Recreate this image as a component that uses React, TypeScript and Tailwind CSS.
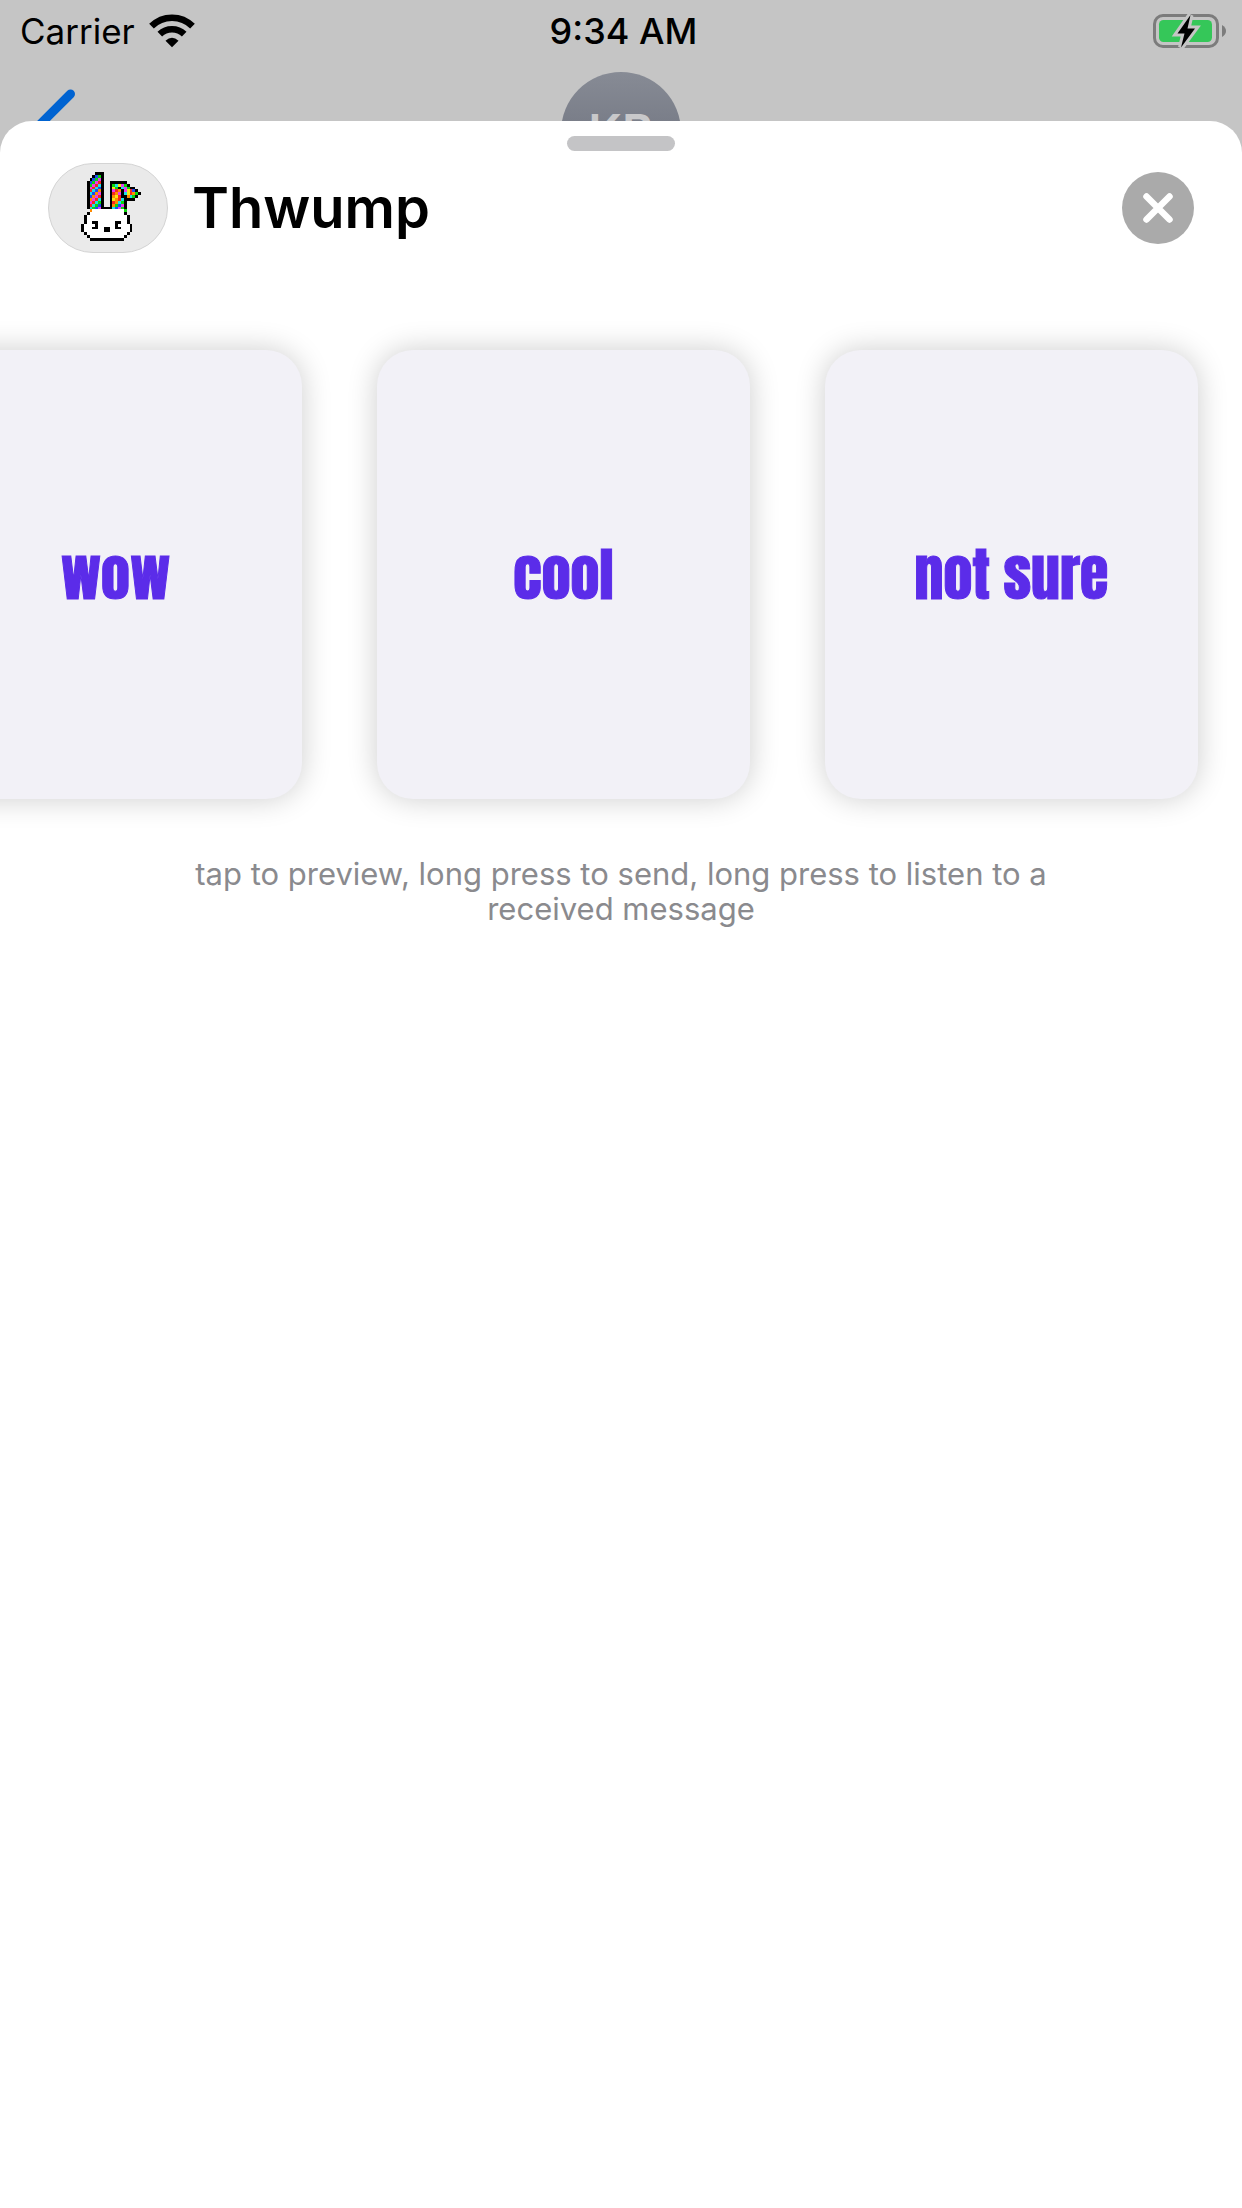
import React from "react";

const INK: Record<string, string> = {
  k: "#000000",
  w: "#ffffff",
  r: "#f5281e",
  o: "#ff8a00",
  y: "#f5e616",
  g: "#0bd80b",
  c: "#1fe0e6",
  b: "#1c4cf0",
  m: "#e83cf0",
};

const BUNNY = [
  ".....kkk.............",
  "....kbgk.............",
  "...kbgmk.............",
  "..kbgmrk..kkkkkk.....",
  "..kgmrck..kgcymgk....",
  "..kmrcbk..kygkcmgkk..",
  "..krcbok..kmrokmyrbk.",
  "..kcbomk..kromkcyrogk",
  "..kbomrk..koyrkkocgk.",
  "..komrck..kyorckkkk..",
  "..kmrcgk..krocgk.....",
  "..krcgbk..kogbmk.....",
  "..kcgbmkkkkcbmgk.....",
  "...owwwwwwwwwwwg.....",
  "..kwwwwwwwwwwwwk.....",
  ".kwwwwwwwwwwwwwwk....",
  ".kwwwwwwwwwwwwwwk....",
  ".kwwkkwwwwwwkkwwk....",
  "kwwwwkwwwwwwkwwwwk...",
  "kwwwkkwwkkwwkkwwwk...",
  "kwwwwwwwkkwwwwwwwk...",
  ".kwwwwwwwwwwwwwwk....",
  "..kwwwwwwwwwwwwk.....",
  "...kkkkkkkkkkkk......",
];

function Bunny() {
  return (
    <svg viewBox="0 0 21 24" className="h-[69px] w-[60px]" shapeRendering="crispEdges" aria-hidden="true">
      {BUNNY.flatMap((row, y) =>
        row.split("").map((p, x) => (p === "." ? null : <rect key={`${x}-${y}`} x={x} y={y} width="1" height="1" fill={INK[p]} />)),
      )}
    </svg>
  );
}

function Wifi() {
  return (
    <svg viewBox="0 0 46 34" className="h-[34px] w-[46px]" aria-hidden="true">
      <g fill="none" stroke="#000" strokeWidth="6.6">
        <path d="M2.5 12.2A29 29 0 0 1 43.5 12.2" />
        <path d="M10.8 20.2A17.5 17.5 0 0 1 35.2 20.2" />
      </g>
      <path d="M16.5 26.7Q23 20.7 29.5 26.7L23 33.2Z" />
    </svg>
  );
}

function Battery() {
  return (
    <svg viewBox="0 0 74 38" className="h-[38px] w-[74px]" role="img" aria-label="Battery charging">
      <rect x="1.5" y="3.5" width="63" height="31" rx="8.5" fill="none" stroke="#7c7c7c" strokeWidth="3" />
      <rect x="6" y="8" width="53" height="22" rx="4.5" fill="#35c759" />
      <path d="M69 13Q73 15.500 73 19T69 25Z" fill="#7c7c7c" />
      <path d="M37.500 3L24.500 21.500H31.500L28 35.500L42 16.500H34.500Z" fill="#000" stroke="#c5c5c5" strokeWidth="6" paintOrder="stroke" />
    </svg>
  );
}

function StickerCard({ label }: { label: string }) {
  return (
    <button
      type="button"
      className="flex h-[449px] w-[373px] shrink-0 items-center justify-center rounded-[36px] bg-[#f2f1f7] font-['Impact','Anton','Liberation_Sans',sans-serif] text-[58px] leading-none font-normal text-[#5b2ce9] shadow-[0_0_30px_rgba(0,0,0,0.2)] [-webkit-text-stroke:1px_#5b2ce9]"
    >
      {label}
    </button>
  );
}

export default function App() {
  return (
    <div className="flex min-h-screen flex-col overflow-hidden bg-[#c5c5c5] font-['Inter',sans-serif] text-black">
      <div className="grid h-[62px] shrink-0 grid-cols-3 items-center pr-[15px] pl-5 text-[36px] leading-none">
        <div className="flex items-center gap-3.5">
          <span className="text-[35px]">Carrier</span>
          <Wifi />
        </div>
        <time className="text-center font-medium">9:34 AM</time>
        <div className="flex justify-end">
          <Battery />
        </div>
      </div>

      <div className="grid h-[59px] shrink-0 grid-cols-3 overflow-hidden pt-[10px]">
        <button type="button" aria-label="Back" className="flex items-start pt-3 pl-8">
          <svg viewBox="0 0 50 80" className="h-20 w-[50px] shrink-0" aria-hidden="true">
            <path d="M38.500 10L7 41.500L38.500 73" fill="none" stroke="#0063d1" strokeWidth="9" strokeLinecap="round" />
          </svg>
        </button>
        <div className="flex h-[120px] w-[120px] items-center justify-center justify-self-center rounded-full bg-linear-to-b from-[#878b95] to-[#686c78] text-[48px] font-semibold text-[#c8c8ca]">
          KB
        </div>
      </div>

      <main className="flex grow flex-col rounded-t-[32px] bg-white pt-[15px]">
        <div className="h-[15px] w-[108px] shrink-0 self-center rounded-full bg-[#c4c4c6]" />

        <header className="mt-3 flex items-center gap-6 px-12">
          <div className="flex h-[90px] w-[120px] items-center justify-center rounded-[50px] border border-[#d4d4d4] bg-[#eaeaea] pb-1 pl-1.5">
            <Bunny />
          </div>
          <h1 className="grow text-[56px] leading-[90px] font-semibold">Thwump</h1>
          <button type="button" aria-label="Close" className="flex size-[72px] items-center justify-center rounded-full bg-[#aaaaaa]">
            <svg viewBox="0 0 32 32" className="size-8" aria-hidden="true">
              <path d="M4.500 4.500L27.500 27.500M27.500 4.500L4.500 27.500" stroke="#fff" strokeWidth="6.500" strokeLinecap="round" />
            </svg>
          </button>
        </header>

        <section aria-label="Stickers" className="mt-[49px] flex justify-end gap-[75px] overflow-hidden py-12 pr-11">
          <StickerCard label="wow" />
          <StickerCard label="cool" />
          <StickerCard label="not sure" />
        </section>

        <p className="mx-auto mt-[9px] max-w-[900px] text-center text-[31px] leading-[35px] text-[#8a8a8e]">
          tap to preview, long press to send, long press to listen to a received message
        </p>
      </main>
    </div>
  );
}
